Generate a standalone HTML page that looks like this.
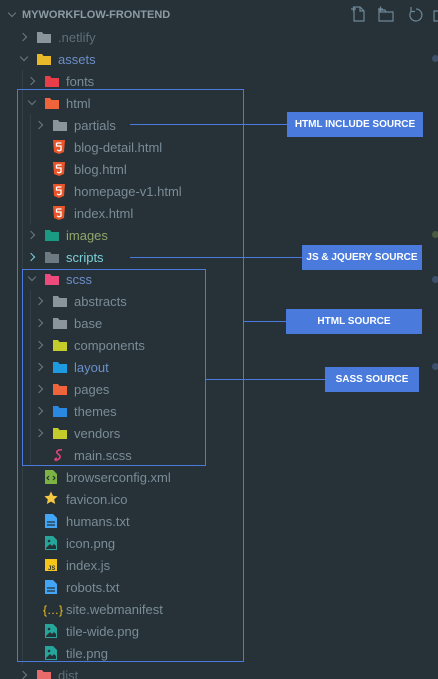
<!DOCTYPE html>
<html><head><meta charset="utf-8"><style>
*{margin:0;padding:0;box-sizing:border-box}
html,body{width:438px;height:679px;overflow:hidden}
body{background:#263238;position:relative;font-family:"Liberation Sans",sans-serif;font-size:13px;color:#7b8c96}
.r{position:absolute;height:22px;line-height:22px;white-space:nowrap}
.chev{position:absolute;width:6px;height:6px;border-right:1.3px solid #6c7a82;border-bottom:1.3px solid #6c7a82}
.c{transform:rotate(-45deg)}
.o{transform:rotate(45deg)}
.ic{position:absolute}
.t{position:absolute}
.lab{position:absolute;background:#4a7bdc;color:#fff;font-weight:bold;font-size:10px;text-align:center;line-height:25px;height:25px}
.ln{position:absolute;background:#4a7bdc}
.dot{position:absolute;width:7px;height:7px;border-radius:50%;right:-1px}
</style></head><body>
<div class="chev o" style="left:9px;top:10px"></div>
<div class="r" style="left:22px;top:4px;font-weight:bold;font-size:11px;color:#8d9ba3">MYWORKFLOW-FRONTEND</div>
<svg style="position:absolute;left:350px;top:6px" width="88" height="16" fill="none" stroke="#6d8796" stroke-width="1.2">
<path d="M4 1h6l4 4v10H4z M10 1v4h4 M1 3h5 M3.5 0.5v5"/>
<path d="M29 4h6l1 2h7v9H29z M29 6h14 M28 3h5 M30.5 0.5v5"/>
<path d="M66 3a6 6 0 1 1-5 2.5 M61 1v4.5h4"/>
<path d="M84 5h6v10h-6z"/>
</svg>
<div style="position:absolute;left:22px;top:70px;width:1px;height:595px;background:#333f46"></div>
<div style="position:absolute;left:30px;top:114px;width:1px;height:110px;background:#333f46"></div>
<div style="position:absolute;left:30px;top:290px;width:1px;height:176px;background:#333f46"></div>
<div id="tree"></div>
<div style="position:absolute;left:17px;top:89px;width:227px;height:573px;border:1px solid #4a7bdc"></div>
<div style="position:absolute;left:22px;top:269px;width:184px;height:197px;border:1px solid #4a7bdc"></div>
<div class="ln" style="left:130px;top:124px;width:157px;height:1px"></div>
<div class="ln" style="left:130px;top:257px;width:172px;height:1px"></div>
<div class="ln" style="left:243px;top:321px;width:43px;height:1px"></div>
<div class="ln" style="left:205px;top:379px;width:120px;height:1px"></div>
<div class="lab" style="left:287px;top:112px;width:136px">HTML INCLUDE SOURCE</div>
<div class="lab" style="left:302px;top:245px;width:120px">JS &amp; JQUERY SOURCE</div>
<div class="lab" style="left:286px;top:309px;width:136px">HTML SOURCE</div>
<div class="lab" style="left:325px;top:367px;width:94px">SASS SOURCE</div>
<div class="dot" style="top:55px;background:#3d4f6a"></div>
<div class="dot" style="top:231px;background:#4b5a3e"></div>
<div class="dot" style="top:276px;background:#3d4f6a"></div>
<div class="dot" style="top:363px;background:#3d4f6a"></div>
<script>
const rows=[
["f",0,"c","#8a959b",".netlify","#5f6e77"],
["f",0,"o","#e8b828","assets","#6d8fc8"],
["f",1,"c","#e83e4a","fonts"],
["f",1,"o","#f0643c","html"],
["f",2,"c","#8a959b","partials"],
["h",2,"","#e8552a","blog-detail.html"],
["h",2,"","#e8552a","blog.html"],
["h",2,"","#e8552a","homepage-v1.html"],
["h",2,"","#e8552a","index.html"],
["f",1,"c","#1a9a82","images","#8ea66a"],
["f",1,"c","#6d7a82","scripts","#7ccfd8"],
["f",1,"o","#ec4b7c","scss","#6d8fc8"],
["f",2,"c","#8a959b","abstracts"],
["f",2,"c","#8a959b","base"],
["f",2,"c","#c3cc2a","components"],
["f",2,"c","#1e9ae0","layout","#6d8fc8"],
["f",2,"c","#f0643c","pages"],
["f",2,"c","#2a88e0","themes"],
["f",2,"c","#c3cc2a","vendors"],
["s",2,"","#e0447a","main.scss"],
["x",1,"","#7cb342","browserconfig.xml"],
["star",1,"","#f5c842","favicon.ico"],
["d",1,"","#42a5f5","humans.txt"],
["p",1,"","#26a69a","icon.png"],
["j",1,"","#f5c518","index.js"],
["d",1,"","#42a5f5","robots.txt"],
["b",1,"","#f5c518","site.webmanifest"],
["p",1,"","#26a69a","tile-wide.png"],
["p",1,"","#26a69a","tile.png"],
["f",0,"c","#e86a6a","dist","#5f6e77"]];
let h="";
rows.forEach((r,i)=>{
 const top=27+22*i, lv=r[1], ix=37+8*lv, tx=58+8*lv, col=r[3];
 if(r[2]){const cx=25+8*lv-4; h+=`<div class="chev ${r[2]}" style="left:${r[2]=='c'?cx-1:cx}px;top:${top+(r[2]=='c'?7:5)}px;${i==10?'border-color:#7ccfd8':''}"></div>`;}
 let s="";
 switch(r[0]){
 case"f":s=`<svg class="ic" style="left:${ix}px;top:${top+3}px" width="14" height="14"><path d="M0 2h5l1.5 2H14v9H0z" fill="${col}"/></svg>`;break;
 case"h":s=`<svg class="ic" style="left:${ix}px;top:${top+3}px" width="12" height="14"><path d="M0 0h12l-1 12-5 2-5-2z" fill="${col}"/><path d="M3.5 3h5M3.5 3v3h4.5v4l-2 .8-2-.8" stroke="#fff" stroke-width="1.3" fill="none"/></svg>`;break;
 case"s":s=`<svg class="ic" style="left:${ix}px;top:${top+3}px" width="14" height="14"><path d="M9 2c-4-1-7 2-4 4s3 4-1 6c-2 1-3-1 0-2" stroke="${col}" stroke-width="1.6" fill="none"/></svg>`;break;
 case"x":s=`<svg class="ic" style="left:${ix}px;top:${top+3}px" width="12" height="14"><path d="M0 0h8l4 4v10H0z" fill="${col}"/><path d="M4 6l-2 2 2 2M8 6l2 2-2 2" stroke="#263238" stroke-width="1.2" fill="none"/></svg>`;break;
 case"d":s=`<svg class="ic" style="left:${ix}px;top:${top+3}px" width="12" height="14"><path d="M0 0h8l4 4v10H0z" fill="${col}"/><path d="M2 8h8M2 11h8" stroke="#263238" stroke-width="1.2"/></svg>`;break;
 case"p":s=`<svg class="ic" style="left:${ix}px;top:${top+3}px" width="12" height="14"><path d="M0 0h8l4 4v10H0z" fill="${col}"/><path d="M1 12l4-4 2 2 2-2 2 2v3H1z" fill="#263238"/><circle cx="4" cy="5" r="1.3" fill="#263238"/></svg>`;break;
 case"j":s=`<svg class="ic" style="left:${ix}px;top:${top+4}px" width="12" height="12"><rect width="12" height="12" fill="${col}"/><text x="3" y="11" font-size="6" font-weight="bold" fill="#263238" font-family="Liberation Sans">JS</text></svg>`;break;
 case"star":s=`<svg class="ic" style="left:${ix-1}px;top:${top+2}px" width="14" height="14"><path d="M7 0.5l2 4.3 4.6.5-3.4 3.1 1 4.6L7 10.6 2.8 13l1-4.6L.4 5.3 5 4.8z" fill="${col}"/></svg>`;break;
 case"b":s=`<span class="ic" style="left:${ix-2}px;top:${top}px;color:${col};font-size:12px;line-height:22px">{…}</span>`;break;
 }
 h+=s+`<div class="r t" style="left:${tx}px;top:${top}px;${r[5]?'color:'+r[5]:''}">${r[4]}</div>`;
});
document.getElementById("tree").innerHTML=h;
</script>
</body></html>
